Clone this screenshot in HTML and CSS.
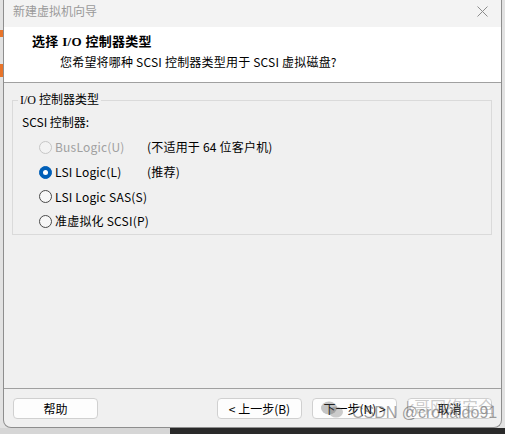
FILE: index.html
```html
<!DOCTYPE html>
<html lang="zh-CN">
<head>
<meta charset="utf-8">
<title>新建虚拟机向导</title>
<link rel="stylesheet" href="styles.css">
</head>
<body>
<div class="dialog">
  <div class="titlebar">
    <span class="title">新建虚拟机向导</span>
    <svg class="close" width="11" height="11" viewBox="0 0 11 11"><path d="M0.5 0.5 L10.5 10.5 M10.5 0.5 L0.5 10.5" stroke="#8c8c8c" stroke-width="1" fill="none"/></svg>
  </div>
  <div class="header">
    <div class="h-title">选择 I/O 控制器类型</div>
    <div class="h-sub">您希望将哪种 SCSI 控制器类型用于 SCSI 虚拟磁盘?</div>
  </div>
  <div class="body">
    <fieldset class="group">
      <legend>I/O 控制器类型</legend>
      <div class="caption">SCSI 控制器:</div>
      <div class="options">
        <div class="opt disabled"><span class="radio"></span><span class="lbl">BusLogic(U)</span><span class="note">(不适用于 64 位客户机)</span></div>
        <div class="opt checked"><span class="radio"></span><span class="lbl">LSI Logic(L)</span><span class="note">(推荐)</span></div>
        <div class="opt"><span class="radio"></span><span class="lbl">LSI Logic SAS(S)</span></div>
        <div class="opt"><span class="radio"></span><span class="lbl">准虚拟化 SCSI(P)</span></div>
      </div>
    </fieldset>
  </div>
  <div class="footer">
    <button class="btn">帮助</button>
    <span class="spacer"></span>
    <button class="btn">&lt; 上一步(B)</button>
    <button class="btn">下一步(N) &gt;</button>
    <button class="btn">取消</button>
  </div>
  <div class="watermark">
    <svg class="wm-icon" width="24" height="20" viewBox="0 0 24 20"><ellipse cx="9" cy="8" rx="8" ry="6.5" fill="rgba(90,90,90,0.35)"/><ellipse cx="16" cy="12" rx="7" ry="5.5" fill="rgba(90,90,90,0.3)"/></svg>
    <span class="wm-csdn">CSDN @cronaldo91</span>
    <span class="wm-k">k哥网络安全</span>
  </div>
</div>
</body>
</html>
```

FILE: styles.css
```css
html, body {
  margin: 0;
  padding: 0;
}
body {
  width: 505px;
  height: 434px;
  overflow: hidden;
  font-family: "Noto Sans CJK SC", sans-serif;
  font-size: 12px;
  color: #000;
  background:
    linear-gradient(#e8742a, #e8742a) 0 30px / 3px 7px no-repeat,
    linear-gradient(#e8742a, #e8742a) 0 64px / 3px 13px no-repeat,
    linear-gradient(to right, #d6d6d6 170px, #2a2a2a 170px) 0 428px / 100% 6px no-repeat,
    #e2e2e2;
}
.dialog {
  position: relative;
  box-sizing: border-box;
  margin-left: 3px;
  width: 499px;
  height: 428px;
  border: 1px solid #8e8e8e;
  border-top: none;
  border-radius: 0 0 8px 8px;
  overflow: hidden;
  background: #f0f0f0;
  display: flex;
  flex-direction: column;
}
.titlebar {
  height: 27px;
  flex: none;
  background: #f3f3f3;
  display: flex;
  align-items: center;
  padding-left: 9px;
  padding-right: 13px;
}
.title {
  color: #9a9a9a;
  line-height: 16px;
  margin-top: -5px;
  flex: 1;
}
.close {
  margin-top: -5px;
}
.header {
  height: 55px;
  flex: none;
  background: #fff;
  border-bottom: 1px solid #a0a0a0;
  padding-left: 28px;
}
.h-title {
  font-family: "Liberation Serif", "Noto Sans CJK SC", serif;
  font-weight: 700;
  font-size: 13px;
  line-height: 16px;
  padding-top: 7px;
  letter-spacing: 0.3px;
}
.h-sub {
  line-height: 16px;
  margin-top: 4px;
  padding-left: 28px;
  letter-spacing: 0.2px;
}
.body {
  flex: 1;
  padding: 9px 9px 0 8px;
}
.group {
  margin: 0;
  padding: 6px 9px 0 9px;
  border: 1px solid #dadada;
  min-width: 0;
}
.group legend {
  font-family: "Liberation Serif", "Noto Sans CJK SC", serif;
  font-size: 12px;
  line-height: 16px;
  padding: 0 2px;
  margin-left: -4px;
}
.caption {
  line-height: 16px;
}
.options {
  margin-top: 5px;
  display: flex;
  flex-direction: column;
}
.opt {
  height: 24.7px;
  display: flex;
  align-items: center;
  padding-left: 17px;
}
.radio {
  box-sizing: border-box;
  width: 13px;
  height: 13px;
  border-radius: 50%;
  border: 1px solid #4a4a4a;
  background: #f7f7f7;
  flex: none;
  display: flex;
  align-items: center;
  justify-content: center;
}
.opt.disabled .radio {
  border-color: #c6c6c6;
  background: #f3f3f3;
}
.opt.checked .radio {
  border-color: #005fb8;
  background: #005fb8;
}
.opt.checked .radio::after {
  content: "";
  width: 5px;
  height: 5px;
  border-radius: 50%;
  background: #fff;
}
.lbl {
  margin-left: 3px;
  width: 92px;
  line-height: 16px;
  white-space: nowrap;
  letter-spacing: 0.2px;
}
.opt.disabled .lbl {
  color: #a0a0a0;
}
.note {
  line-height: 16px;
  white-space: nowrap;
  letter-spacing: 0.2px;
}
.footer {
  flex: none;
  height: 39px;
  box-sizing: border-box;
  border-top: 1px solid #a0a0a0;
  display: flex;
  align-items: flex-start;
  padding: 9px 9px 0 9px;
  gap: 10px;
}
.spacer {
  flex: 1;
}
.btn {
  width: 85px;
  height: 21px;
  box-sizing: border-box;
  border: 1px solid #d0d0d0;
  border-radius: 4px;
  background: #fdfdfd;
  font-family: "Noto Sans CJK SC", sans-serif;
  font-size: 12px;
  line-height: 16px;
  color: #000;
  padding: 0;
}
.watermark {
  position: absolute;
  left: 314px;
  top: 398px;
  width: 185px;
  height: 28px;
  pointer-events: none;
}
.wm-icon {
  position: absolute;
  left: 2px;
  top: 2px;
}
.wm-csdn {
  position: absolute;
  left: 34px;
  top: 5px;
  font-family: "Liberation Sans", sans-serif;
  font-size: 16px;
  line-height: 20px;
  color: rgba(80, 80, 80, 0.55);
  white-space: nowrap;
}
.wm-k {
  position: absolute;
  left: 88px;
  top: 0;
  font-family: "Liberation Sans", "Noto Sans CJK SC", sans-serif;
  font-size: 16px;
  line-height: 20px;
  color: rgba(120, 120, 120, 0.4);
  white-space: nowrap;
}
```
